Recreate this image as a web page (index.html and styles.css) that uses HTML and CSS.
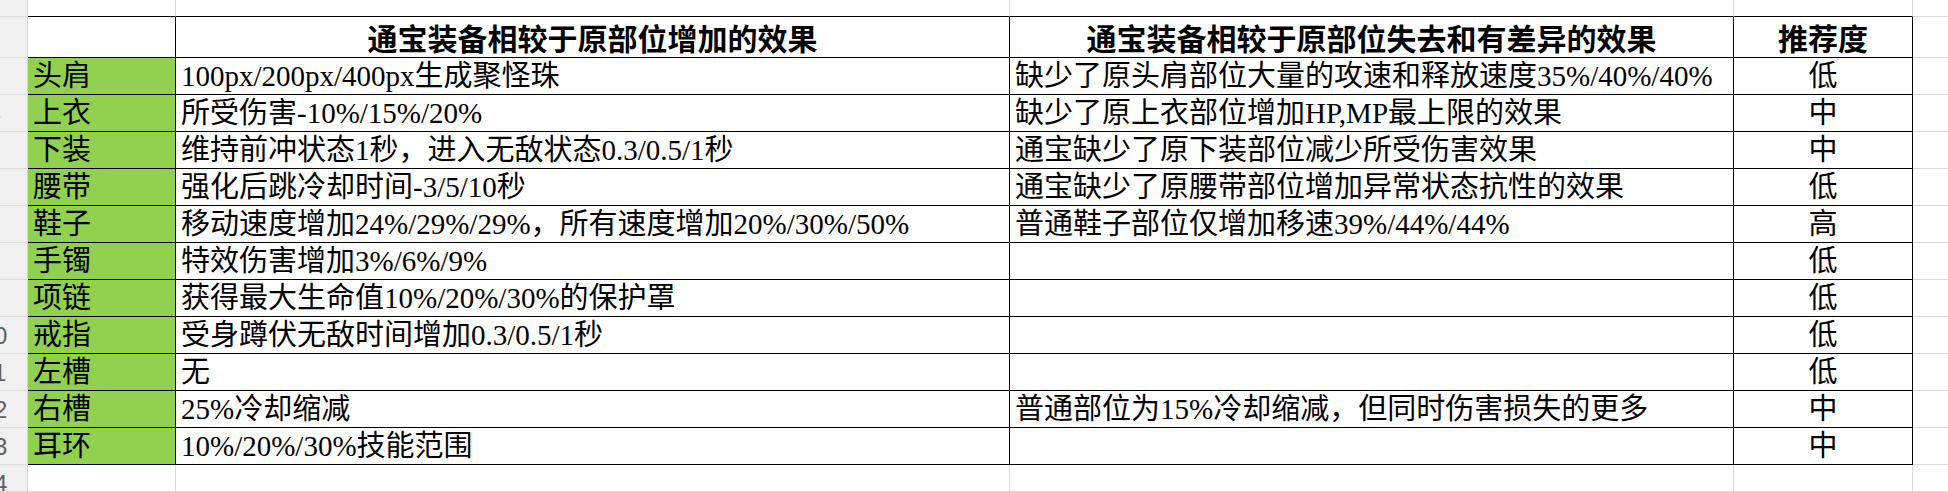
FILE: index.html
```html
<!DOCTYPE html>
<html lang="zh-CN">
<head>
<meta charset="utf-8">
<title>通宝装备效果对比</title>
<link rel="stylesheet" href="styles.css">
</head>
<body>
<div class="sheet">
  <div class="rh"><span class="num">1</span></div>
  <div class="c top"></div>
  <div class="c top"></div>
  <div class="c top"></div>
  <div class="c top"></div>
  <div class="c ext"></div>

  <div class="rh"><span class="num">2</span></div>
  <div class="c t"></div>
  <div class="c t h">通宝装备相较于原部位增加的效果</div>
  <div class="c t h">通宝装备相较于原部位失去和有差异的效果</div>
  <div class="c t h">推荐度</div>
  <div class="c ext"></div>

  <div class="rh"><span class="num">3</span></div>
  <div class="c t g">头肩</div>
  <div class="c t">100px/200px/400px生成聚怪珠</div>
  <div class="c t">缺少了原头肩部位大量的攻速和释放速度35%/40%/40%</div>
  <div class="c t m">低</div>
  <div class="c ext"></div>

  <div class="rh"><span class="num">4</span></div>
  <div class="c t g">上衣</div>
  <div class="c t">所受伤害-10%/15%/20%</div>
  <div class="c t">缺少了原上衣部位增加HP,MP最上限的效果</div>
  <div class="c t m">中</div>
  <div class="c ext"></div>

  <div class="rh"><span class="num">5</span></div>
  <div class="c t g">下装</div>
  <div class="c t">维持前冲状态1秒，进入无敌状态0.3/0.5/1秒</div>
  <div class="c t">通宝缺少了原下装部位减少所受伤害效果</div>
  <div class="c t m">中</div>
  <div class="c ext"></div>

  <div class="rh"><span class="num">6</span></div>
  <div class="c t g">腰带</div>
  <div class="c t">强化后跳冷却时间-3/5/10秒</div>
  <div class="c t">通宝缺少了原腰带部位增加异常状态抗性的效果</div>
  <div class="c t m">低</div>
  <div class="c ext"></div>

  <div class="rh"><span class="num">7</span></div>
  <div class="c t g">鞋子</div>
  <div class="c t">移动速度增加24%/29%/29%，所有速度增加20%/30%/50%</div>
  <div class="c t">普通鞋子部位仅增加移速39%/44%/44%</div>
  <div class="c t m">高</div>
  <div class="c ext"></div>

  <div class="rh"><span class="num">8</span></div>
  <div class="c t g">手镯</div>
  <div class="c t">特效伤害增加3%/6%/9%</div>
  <div class="c t"></div>
  <div class="c t m">低</div>
  <div class="c ext"></div>

  <div class="rh"><span class="num">9</span></div>
  <div class="c t g">项链</div>
  <div class="c t">获得最大生命值10%/20%/30%的保护罩</div>
  <div class="c t"></div>
  <div class="c t m">低</div>
  <div class="c ext"></div>

  <div class="rh"><span class="num">10</span></div>
  <div class="c t g">戒指</div>
  <div class="c t">受身蹲伏无敌时间增加0.3/0.5/1秒</div>
  <div class="c t"></div>
  <div class="c t m">低</div>
  <div class="c ext"></div>

  <div class="rh"><span class="num">11</span></div>
  <div class="c t g">左槽</div>
  <div class="c t">无</div>
  <div class="c t"></div>
  <div class="c t m">低</div>
  <div class="c ext"></div>

  <div class="rh"><span class="num">12</span></div>
  <div class="c t g">右槽</div>
  <div class="c t">25%冷却缩减</div>
  <div class="c t">普通部位为15%冷却缩减，但同时伤害损失的更多</div>
  <div class="c t m">中</div>
  <div class="c ext"></div>

  <div class="rh"><span class="num">13</span></div>
  <div class="c t g">耳环</div>
  <div class="c t">10%/20%/30%技能范围</div>
  <div class="c t"></div>
  <div class="c t m">中</div>
  <div class="c ext"></div>

  <div class="rh"><span class="num">14</span></div>
  <div class="c"></div>
  <div class="c"></div>
  <div class="c"></div>
  <div class="c"></div>
  <div class="c ext"></div>
</div>
</body>
</html>
```
FILE: styles.css
```css
* {
  box-sizing: border-box;
}

html, body {
  margin: 0;
  padding: 0;
  background: #ffffff;
}

body {
  width: 1948px;
  height: 492px;
  overflow: hidden;
  font-family: "Liberation Serif", "Noto Sans CJK SC", serif;
  color: #000000;
}

.sheet {
  display: grid;
  grid-template-columns: 28px 148px 834px 724px 179px 1fr;
  grid-template-rows: 17px 41px repeat(11, 37px) 1fr;
  width: 1948px;
  height: 492px;
}

.rh {
  background: #f0f0f0;
  border-right: 1px solid #d4d4d4;
  border-bottom: 1px solid #dcdcdc;
  overflow: hidden;
  display: flex;
}

.num {
  flex: none;
  width: 60px;
  margin-left: -36px;
  text-align: center;
  font-family: "Liberation Sans", "Noto Sans", sans-serif;
  font-size: 24px;
  line-height: 38px;
  color: #606060;
}

.c {
  border-right: 1px solid #dadada;
  border-bottom: 1px solid #dadada;
  font-size: 29px;
  line-height: 36px;
  padding: 0 5px;
  white-space: nowrap;
  overflow: hidden;
}

.top {
  border-bottom-color: #000000;
}

.t {
  border-right-color: #000000;
  border-bottom-color: #000000;
}

.ext {
  border-right: none;
}

.g {
  background: #92d050;
}

.h {
  font-family: "Noto Sans CJK SC", sans-serif;
  font-weight: 700;
  font-size: 30px;
  line-height: 40px;
  text-align: center;
}

.m {
  text-align: center;
}
```
